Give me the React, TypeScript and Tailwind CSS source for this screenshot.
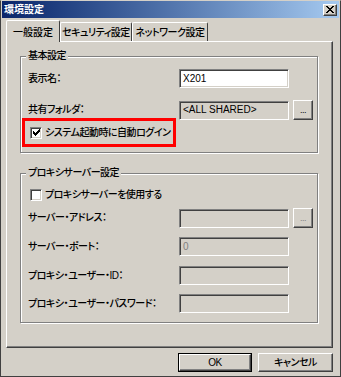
import type { ReactNode } from 'react';

const raised =
  'border border-t-white border-l-white border-b-[#404040] border-r-[#404040] shadow-[inset_-1px_-1px_0_#808080] bg-[#d4d0c8]';
const sunken =
  'border border-t-[#808080] border-l-[#808080] border-b-white border-r-white shadow-[inset_1px_1px_0_#404040,inset_-1px_-1px_0_#d4d0c8]';

// classic 7x7 check mark
function CheckMark() {
  const px: [number, number, number][] = [
    [6, 0, 1],
    [5, 1, 2],
    [0, 2, 1],
    [4, 2, 3],
    [0, 3, 2],
    [3, 3, 3],
    [0, 4, 5],
    [1, 5, 3],
    [2, 6, 1],
  ];
  return (
    <svg width="7" height="7" viewBox="0 0 7 7" shapeRendering="crispEdges">
      {px.map(([x, y, w], i) => (
        <rect key={i} x={x} y={y} width={w} height={1} fill="#000" />
      ))}
    </svg>
  );
}

function CloseGlyph() {
  const rows: [number, number][][] = [
    [[0, 2], [6, 2]],
    [[1, 2], [5, 2]],
    [[2, 4]],
    [[3, 2]],
    [[2, 4]],
    [[1, 2], [5, 2]],
    [[0, 2], [6, 2]],
  ];
  return (
    <svg width="8" height="7" viewBox="0 0 8 7" shapeRendering="crispEdges">
      {rows.map((r, y) =>
        r.map(([x, w], i) => <rect key={`${y}-${i}`} x={x} y={y} width={w} height={1} fill="#000" />)
      )}
    </svg>
  );
}

function Checkbox({ checked }: { checked?: boolean }) {
  return (
    <div className={`w-[12px] h-[12px] bg-white flex items-center justify-center shrink-0 ${sunken}`}>
      {checked && <CheckMark />}
    </div>
  );
}

function Field({ value, gray, dim }: { value?: string; gray?: boolean; dim?: boolean }) {
  return (
    <div
      className={`w-[110px] h-[19px] shrink-0 flex items-center pl-[3px] text-[10px] tracking-normal ${sunken} ${
        gray ? 'bg-[#d4d0c8]' : 'bg-white'
      } ${dim ? 'text-[#808080]' : 'text-black'}`}
    >
      {value}
    </div>
  );
}

function Dots({ disabled }: { disabled?: boolean }) {
  return (
    <div
      className={`ml-[4px] w-[20px] h-[20px] shrink-0 flex items-end justify-center pb-[4px] text-[9px] leading-[9px] ${raised} ${
        disabled ? 'text-[#808080]' : 'text-black'
      }`}
    >
      ...
    </div>
  );
}

function Row({ label, children, className = '' }: { label: string; children: ReactNode; className?: string }) {
  return (
    <div className={`flex items-center ${className}`}>
      <span className="w-[151px] shrink-0 whitespace-nowrap">{label}</span>
      {children}
    </div>
  );
}

function Group({ title, className = '', children }: { title: string; className?: string; children: ReactNode }) {
  return (
    <div
      className={`relative ml-[13px] w-[298px] border border-[#808080] shadow-[inset_1px_1px_0_#fff,1px_1px_0_#fff] pl-[7px] ${className}`}
    >
      <span className="absolute top-[-7px] left-[5px] px-[2px] h-[12px] leading-[12px] whitespace-nowrap bg-[#d4d0c8]">
        {title}
      </span>
      {children}
    </div>
  );
}

const tab = 'h-[19px] flex items-center justify-center pt-[1px] whitespace-nowrap border-l border-t border-white border-r border-r-[#404040] rounded-t-[2px]';

export default function App() {
  return (
    <div className="w-[341px] h-[377px] bg-[#d4d0c8] border border-[#404040] border-t-[#d4d0c8] text-[10px] leading-[12px] font-medium tracking-[-0.5px] text-black [font-family:'Liberation_Sans','Noto_Sans_CJK_JP',sans-serif] [font-feature-settings:'palt'] overflow-hidden">
      {/* title bar */}
      <div className="mx-[1px] h-[17px] flex items-center justify-between pl-[2px] pr-[2px] bg-gradient-to-r from-[#0a246a] to-[#a6caf0]">
        <span className="text-white font-bold text-[10px] tracking-normal">環境設定</span>
        <div className={`w-[14px] h-[12px] flex items-center justify-center ${raised}`}>
          <CloseGlyph />
        </div>
      </div>

      <div className="ml-[5px] w-[327px]">
        {/* tabs */}
        <div className="mt-[2px] h-[21px] flex items-end">
          <div className="relative z-10 -mb-px w-[54px] h-[22px] flex items-center justify-center pt-[2px] whitespace-nowrap tracking-normal bg-[#d4d0c8] border-l border-t border-white border-r border-r-[#404040] rounded-t-[2px]">
            一般設定
          </div>
          <div className={`w-[72px] ${tab}`}>セキュリティ設定</div>
          <div className={`w-[76px] ${tab}`}>ネットワーク設定</div>
        </div>

        {/* panel */}
        <div className="h-[307px] border border-t-white border-l-white border-b-[#404040] border-r-[#404040] shadow-[inset_-1px_-1px_0_#808080]">
          <Group title="基本設定" className="mt-[14px] pt-[12px] pb-[5px]">
            <Row label="表示名：" className="h-[19px]">
              <Field value="X201" />
            </Row>
            <Row label="共有フォルダ：" className="mt-[12px] h-[20px]">
              <Field value="<ALL SHARED>" gray />
              <Dots />
            </Row>
            <div className="relative -mt-[2px] -ml-[6px] w-[154px] h-[29px] border-[3px] border-[#ff0000] flex items-center gap-[3px] pl-[5px] whitespace-nowrap">
              <Checkbox checked />
              <span>システム起動時に自動ログイン</span>
            </div>
          </Group>

          <Group title="プロキシサーバー設定" className="mt-[20px] pt-[15px] pb-[9px]">
            <div className="ml-[2px] h-[12px] flex items-center gap-[3px] whitespace-nowrap">
              <Checkbox />
              <span>プロキシサーバーを使用する</span>
            </div>
            <Row label="サーバー・アドレス：" className="mt-[7px] h-[20px]">
              <Field gray />
              <Dots disabled />
            </Row>
            <Row label="サーバー・ポート：" className="mt-[9px] h-[19px]">
              <Field value="0" gray dim />
            </Row>
            <Row label="プロキシ・ユーザー・ID：" className="mt-[10px] h-[19px]">
              <Field gray />
            </Row>
            <Row label="プロキシ・ユーザー・パスワード：" className="mt-[9px] h-[19px]">
              <Field gray />
            </Row>
          </Group>
        </div>

        {/* buttons */}
        <div className="mt-[5px] flex justify-end gap-[6px]">
          <div className="w-[74px] h-[19px] border border-black">
            <div className={`w-full h-full flex items-center justify-center ${raised}`}>OK</div>
          </div>
          <div className={`w-[75px] h-[19px] flex items-center justify-center ${raised}`}>キャンセル</div>
        </div>
      </div>
    </div>
  );
}
